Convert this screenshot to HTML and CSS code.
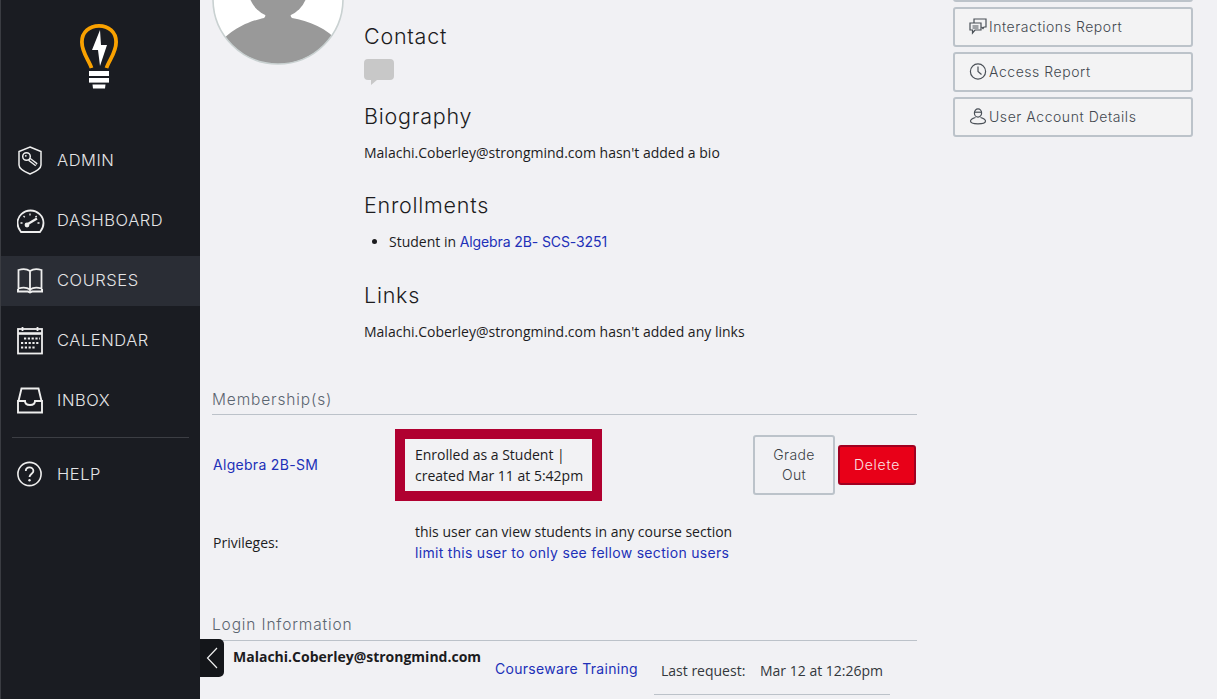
FILE: index.html
```html
<!DOCTYPE html>
<html lang="en">
<head>
<meta charset="utf-8">
<title>User profile</title>
<link rel="stylesheet" href="styles.css">
</head>
<body>
<div class="app">
  <aside class="sidebar">
    <div class="logo">
      <svg width="38" height="66" viewBox="0 0 38 66">
        <path d="M11.5 45 C9 37 1.9 30 1.9 19 C1.9 9 9.5 2.9 19 2.9 C28.5 2.9 36.1 9 36.1 19 C36.1 30 29 37 26.5 45" fill="none" stroke="#f9a100" stroke-width="3.8"/>
        <path d="M20 7 L12 27 L18 27 L20 43 L27 22 L21 22 Z" fill="#fff"/>
        <rect x="9" y="48" width="20" height="5" fill="#fff"/>
        <rect x="9" y="55" width="20" height="4.6" fill="#fff"/>
        <path d="M12.5 61.5 H25.5 L25 65.5 H13 Z" fill="#fff"/>
      </svg>
    </div>
    <nav class="nav">
      <a class="nav-item">
        <svg class="nav-icon" viewBox="0 0 28 30" fill="none" stroke="#eee" stroke-width="1.5">
          <path d="M13 2 L24 6.5 V20 C24 24 18 27 13 29 C8 27 2 24 2 20 V6.5 Z"/>
          <circle cx="9.5" cy="11.5" r="3.8" stroke-width="1.5"/>
          <circle cx="8.8" cy="10.8" r=".9" fill="#eee" stroke="none"/>
          <path d="M12.2 14.2 L19.5 19.8" stroke-width="3.8"/>
          <path d="M13 14.8 L19.2 19.6" stroke="#1a1c22" stroke-width="1.1"/>
        </svg>
        <span>ADMIN</span>
      </a>
      <a class="nav-item">
        <svg class="nav-icon" viewBox="0 0 28 30" fill="none" stroke="#eee" stroke-width="1.8">
          <path d="M3.5 27 H22.5 C25 24 26 21 26 18 C26 11 20 5.5 13 5.5 C6 5.5 0 11 0 18 C0 21 1 24 3.5 27 Z" transform="translate(0.5 0)"/>
          <path d="M10 19.5 L20 13.5" stroke-width="2.2"/>
          <circle cx="10" cy="20" r="2.4" fill="#eee" stroke="none"/>
          <path d="M13 8.5 V10.5 M6.5 11 L7.8 12.3 M19.7 11 L18.4 12.3 M3.5 18 H5.5 M20.5 18 H22.5" stroke-width="1.3"/>
        </svg>
        <span>DASHBOARD</span>
      </a>
      <a class="nav-item active">
        <svg class="nav-icon" viewBox="0 0 28 30" fill="none" stroke="#eee" stroke-width="1.8">
          <path d="M13 6 C10 4 5 4 1.5 5 V23.5 C5 22.5 10 22.5 13 24.5 C16 22.5 21 22.5 24.5 23.5 V5 C21 4 16 4 13 6 Z M13 6 V26"/>
          <path d="M1 24 V26.5 H11 L13 27.5 L15 26.5 H25 V24" stroke-width="2"/>
        </svg>
        <span>COURSES</span>
      </a>
      <a class="nav-item">
        <svg class="nav-icon" viewBox="0 0 28 30" fill="none" stroke="#eee" stroke-width="1.8">
          <rect x="1" y="4" width="24" height="24.5"/>
          <path d="M1 8.5 H25" stroke-width="2.6"/>
          <path d="M5.5 2 V6 M20.5 2 V6"/>
          <path d="M7 13.5 H23 M4 18 H22 M4 22.5 H18" stroke-width="2.2" stroke-dasharray="2.2 1.6"/>
        </svg>
        <span>CALENDAR</span>
      </a>
      <a class="nav-item">
        <svg class="nav-icon" viewBox="0 0 28 30" fill="none" stroke="#eee" stroke-width="1.9">
          <path d="M1.5 16 L4.5 3.5 H21.5 L24.5 16"/>
          <path d="M1 16 H8 C8 19 10 20 13 20 C16 20 18 19 18 16 H25 V27.5 H1 Z"/>
        </svg>
        <span>INBOX</span>
      </a>
      <div class="nav-rule"></div>
      <a class="nav-item help">
        <svg class="nav-icon" viewBox="0 0 28 30" fill="none" stroke="#eee" stroke-width="1.6">
          <circle cx="12.5" cy="15" r="11.6"/>
          <path d="M8.8 12 C8.8 9.5 10.6 8.3 12.5 8.3 C14.6 8.3 16.4 9.8 16.4 12 C16.4 14.5 12.5 15 12.5 18" stroke-width="1.8"/>
          <circle cx="12.5" cy="21.2" r="1.2" fill="#eee" stroke="none"/>
        </svg>
        <span>HELP</span>
      </a>
    </nav>
  </aside>

  <main class="main">
    <button class="collapse" aria-label="Collapse">
      <svg width="12" height="22" viewBox="0 0 12 22" fill="none" stroke="#f0f0f0" stroke-width="1.2"><path d="M11 1 L1.5 11 L11 21"/></svg>
    </button>

    <div class="content">
      <section class="profile">
        <div class="avatar-col">
          <div class="avatar-crop">
            <svg class="avatar" width="132" height="132" viewBox="0 0 132 132">
              <defs><clipPath id="round"><circle cx="66" cy="66" r="65"/></clipPath></defs>
              <circle cx="66" cy="66" r="65" fill="#fff"/>
              <g clip-path="url(#round)" fill="#999">
                <ellipse cx="66" cy="55" rx="30" ry="30"/>
                <path d="M5 116 C14 97 38 88 52 85 C54 83 54 80 52 77 H80 C78 80 78 83 80 85 C96 88 116 95 127 110 V132 H5 Z"/>
              </g>
              <circle cx="66" cy="66" r="65" fill="none" stroke="#c9d1d1" stroke-width="1.6"/>
            </svg>
          </div>
        </div>
        <div class="details">
          <h2 class="heading first">Contact</h2>
          <svg class="bubble" width="30" height="26" viewBox="0 0 30 26"><path d="M4 0 H26 A4 4 0 0 1 30 4 V17 A4 4 0 0 1 26 21 H13 L7 26 V21 H4 A4 4 0 0 1 0 17 V4 A4 4 0 0 1 4 0 Z" fill="#c8c8c8"/></svg>
          <h2 class="heading bio">Biography</h2>
          <p class="text">Malachi.Coberley@strongmind.com hasn't added a bio</p>
          <h2 class="heading enroll">Enrollments</h2>
          <ul class="list"><li>Student in <a class="link list-link">Algebra 2B- SCS-3251</a></li></ul>
          <h2 class="heading links">Links</h2>
          <p class="text">Malachi.Coberley@strongmind.com hasn't added any links</p>
        </div>
      </section>

      <section class="membership">
        <h3 class="section-title member-title">Membership(s)</h3>
        <div class="member-row">
          <a class="link course">Algebra 2B-SM</a>
          <div class="enrolled">Enrolled as a Student |<br>created Mar 11 at 5:42pm</div>
          <div class="row-actions">
            <button class="btn-outline">Grade<br>Out</button>
            <button class="btn-danger">Delete</button>
          </div>
        </div>
        <div class="priv-row">
          <span class="priv-label">Privileges:</span>
          <div class="priv-text">
            <div>this user can view students in any course section</div>
            <a class="link">limit this user to only see fellow section users</a>
          </div>
        </div>
      </section>

      <section class="login">
        <h3 class="section-title">Login Information</h3>
        <div class="login-row">
          <strong class="login-email">Malachi.Coberley@strongmind.com</strong>
          <a class="link login-link">Courseware Training</a>
          <div class="login-meta">
            <span class="meta-label">Last request:</span>
            <span>Mar 12 at 12:26pm</span>
          </div>
        </div>
      </section>
    </div>

    <div class="actions">
      <a class="action stub"></a>
      <a class="action">
        <svg class="action-icon" viewBox="0 0 18 18" fill="none" stroke="#4a5057" stroke-width="1.2">
          <path d="M1 6 H12 V13 H6 L3.5 16 V13 H1 Z"/>
          <path d="M5 6 V2 H17 V10 H15 L14 11.5 L12.5 10"/>
          <path d="M3.5 9 H9.5 M3.5 11 H9.5"/>
        </svg>
        Interactions Report
      </a>
      <a class="action">
        <svg class="action-icon" viewBox="0 0 18 18" fill="none" stroke="#4a5057" stroke-width="1.2">
          <circle cx="9" cy="9.5" r="7.6"/>
          <path d="M9 4.5 V9.5 L12.5 12.5"/>
        </svg>
        Access Report
      </a>
      <a class="action">
        <svg class="action-icon" viewBox="0 0 18 18" fill="none" stroke="#4a5057" stroke-width="1.2">
          <ellipse cx="9" cy="6" rx="3.6" ry="4.2"/>
          <path d="M5.6 5.2 H12.4"/>
          <path d="M6.5 10.5 C3 11.5 1.5 12.5 1.5 14 C1.5 16 4 16.8 9 16.8 C14 16.8 16.5 16 16.5 14 C16.5 12.5 15 11.5 11.5 10.5"/>
        </svg>
        User Account Details
      </a>
    </div>
  </main>
</div>
</body>
</html>
```

FILE: styles.css
```css
* { box-sizing: border-box; }
html, body { margin: 0; height: 100%; overflow: hidden; }
body { font-family: "Open Sans", sans-serif; font-size: 14px; color: #1c1c1e; background: #f1f1f4; }
.app { display: flex; height: 699px; width: 1217px; overflow: hidden; }

.sidebar { width: 200px; flex: none; background: #1a1c22; border-left: 1px solid #3a3c42; }
.logo { display: flex; justify-content: flex-start; padding: 23px 0 0 79px; height: 136px; }
.nav { display: flex; flex-direction: column; }
.nav-item { display: flex; align-items: center; height: 50px; margin-bottom: 10px; padding: 0 0 2px 16px; color: #e4e4e6; font-family: Inter, sans-serif; font-weight: 300; font-size: 16.5px; letter-spacing: .55px; }
.nav-item.active { background: #2a2d35; }
.nav-icon { width: 28px; height: 30px; margin-right: 12px; flex: none; }
.nav-rule { height: 1px; background: #3c3e44; margin: 1px 11px 12px 11px; }

.main { position: relative; flex: 1; display: flex; padding-left: 12px; align-items: flex-start; }
.collapse { position: absolute; left: 0; top: 639px; width: 24px; height: 38px; border: 0; padding: 0; background: #14161a; border-radius: 0 5px 5px 0; display: flex; align-items: center; justify-content: center; }

.content { width: 705px; flex: none; }
.profile { display: flex; height: 380px; }
.avatar-col { width: 152px; flex: none; }
.avatar-crop { height: 65px; overflow: hidden; display: flex; align-items: flex-end; }
.avatar { flex: none; }
.details { flex: 1; }
.heading { margin: 0; font-family: Inter, sans-serif; font-weight: 300; font-size: 21.5px; line-height: 26px; color: #1c1c1e; letter-spacing: .75px; }
.heading.first { padding-top: 23px; }
.bubble { display: block; margin-top: 10px; }
.heading.bio { margin-top: 18px; }
.heading.enroll { margin-top: 29px; }
.heading.links { margin-top: 30px; }
.text { margin: 14px 0 0; line-height: 20px; font-size: 14px; }
.list { margin: 14px 0 0; padding-left: 25px; line-height: 20px; font-size: 14px; }
.link { color: #2130b8; text-decoration: none; font-family: Inter, sans-serif; font-size: 14px; letter-spacing: .3px; }
.list-link { letter-spacing: -.1px; }

.section-title { margin: 0; padding-bottom: 5px; border-bottom: 1px solid #bcc2c9; font-family: Inter, sans-serif; font-weight: 300; font-size: 15.5px; line-height: 20px; color: #5b6570; letter-spacing: .85px; }
.member-title { padding-bottom: 4px; }
.membership { padding-top: 10px; }
.member-row { display: flex; align-items: center; margin-top: 14px; height: 72px; }
.course { width: 183px; padding: 0 0 2px 1px; }
.enrolled { width: 207px; height: 72px; border: 10px solid #b00030; padding: 5px 0 5px 10px; line-height: 21px; font-size: 14px; white-space: nowrap; background: #f2f2f4; }
.row-actions { display: flex; align-items: center; margin-left: auto; margin-right: 1px; gap: 3px; }
.btn-outline { width: 82px; height: 60px; background: transparent; border: 2px solid #bcc3ca; border-radius: 3px; font-family: Inter, sans-serif; font-weight: 300; font-size: 14px; letter-spacing: .4px; line-height: 20px; color: #3a3f45; padding: 0; }
.btn-danger { width: 78px; height: 40px; background: #e80018; border: 2px solid #a00020; border-radius: 3px; font-family: Inter, sans-serif; font-weight: 300; font-size: 14px; letter-spacing: .7px; color: #fbe4e6; padding: 0 0 2px; }
.priv-row { display: flex; align-items: center; margin-top: 20px; }
.priv-label { width: 203px; padding-left: 1px; font-size: 14px; }
.priv-text { line-height: 21px; font-size: 14px; }

.login { padding-top: 52px; }
.login-row { display: flex; align-items: flex-start; }
.login-email { margin-left: 21px; width: 262px; padding-top: 6px; font-size: 14px; font-weight: 700; line-height: 20px; }
.login-link { padding-top: 18px; line-height: 20px; width: 159px; }
.login-meta { display: flex; width: 236px; height: 54px; padding: 20px 0 0 7px; line-height: 20px; border-bottom: 1px solid #bcc2c9; font-size: 14px; color: #33373c; }
.meta-label { width: 99px; }

.actions { width: 240px; margin-left: 36px; display: flex; flex-direction: column; gap: 5px; margin-top: -38px; flex: none; }
.action { display: flex; align-items: center; height: 40px; border: 2px solid #bcc3ca; border-radius: 3px; background: #f3f3f4; padding: 0 0 2px 14px; font-family: Inter, sans-serif; font-weight: 300; font-size: 14px; letter-spacing: .55px; color: #42484f; }
.action-icon { width: 18px; height: 18px; margin-right: 2px; flex: none; }
```
